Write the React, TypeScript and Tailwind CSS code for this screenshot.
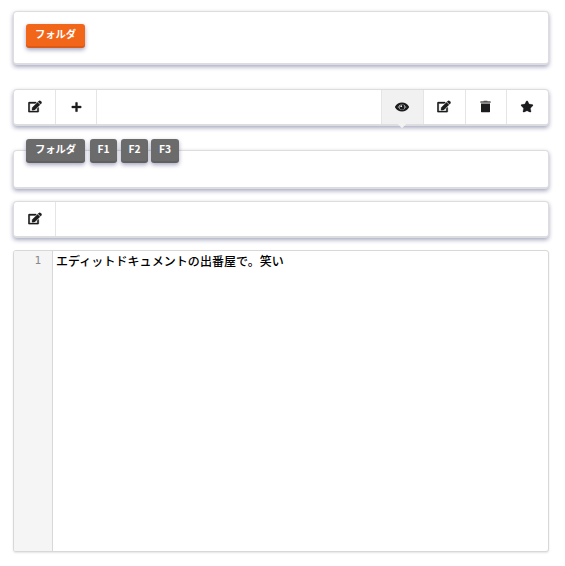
import type { ReactNode } from "react";
import { FaEdit, FaPlus, FaStar } from "react-icons/fa";

const panel =
  "rounded-[4px] border border-b-2 border-[#dddddf] bg-white shadow-[0_2px_4px_rgba(60,65,120,0.45)]";

function Label({ children, className }: { children: ReactNode; className: string }) {
  return (
    <span
      className={`flex h-6 items-center justify-center rounded-[3px] pb-[3px] text-[10.3px] leading-none font-bold text-white ${className}`}
    >
      {children}
    </span>
  );
}

const gray =
  "bg-[#6b6b6b] shadow-[inset_0_-2px_0_rgba(0,0,0,0.1),0_2px_4px_rgba(60,65,120,0.45)]";
const orange =
  "bg-[#f2661a] shadow-[inset_0_-2px_0_rgba(0,0,0,0.1),0_2px_4px_rgba(60,65,120,0.45)]";

function Edit() {
  return <FaEdit className="h-3 w-[14px] -translate-y-[0.5px] stroke-[#1b1c1d] stroke-[14]" />;
}

function Eye() {
  return (
    <svg viewBox="0 0 576 512" className="h-[13px] w-[14px] -translate-x-px -translate-y-[0.5px]" fill="none">
      <path
        stroke="currentColor"
        strokeWidth="84"
        d="M40 256C90 170 178 108 288 108s198 62 248 148c-50 86-138 148-248 148S90 342 40 256z"
      />
      <circle cx="288" cy="256" r="106" fill="currentColor" />
      <path d="M106 256C125 215 145 185 165 165M470 256C451 215 431 185 411 165M106 256C125 297 145 327 165 347M470 256C451 297 431 327 411 347" stroke="currentColor" strokeWidth="60" />
      <circle cx="256" cy="222" r="38" fill="#f1f1f2" />
    </svg>
  );
}

function Trash() {
  return (
    <svg viewBox="0 0 448 512" className="h-3 w-[11px] -translate-x-px -translate-y-[0.5px]" fill="currentColor">
      <path
        opacity=".75"
        d="M0 84V56c0-13.3 10.7-24 24-24h112l9.4-18.7c4-8.2 12.3-13.3 21.4-13.3h114.3c9.1 0 17.4 5.1 21.5 13.3L312 32h112c13.3 0 24 10.7 24 24v28c0 6.6-5.4 12-12 12H12C5.4 96 0 90.6 0 84z"
      />
      <path d="M416 140v324c0 26.5-21.5 48-48 48H80c-26.5 0-48-21.5-48-48V140c0-6.6 5.4-12 12-12h360c6.6 0 12 5.4 12 12z" />
    </svg>
  );
}

function Item({ children, className }: { children: ReactNode; className: string }) {
  return (
    <div className={`flex items-center justify-center border-[#e5e5e6] text-[#1b1c1d] ${className}`}>
      {children}
    </div>
  );
}

export default function App() {
  return (
    <div className="h-[566px] w-[565px] bg-white pt-[11px] pl-[13px] font-['Noto_Sans_CJK_JP',sans-serif]">
      <div className="flex w-[536px] flex-col">
        <section className={`flex h-[54px] items-start pt-3 pl-3 ${panel}`}>
          <Label className={`w-[59px] ${orange}`}>フォルダ</Label>
        </section>

        <nav className={`mt-6 flex h-[37px] ${panel}`}>
          <Item className="w-[42px] border-r"><Edit /></Item>
          <Item className="w-[41px] border-r"><FaPlus className="size-[11px] -translate-y-[0.5px] stroke-[#1b1c1d] stroke-[14]" /></Item>
          <Item className="relative ml-auto w-[43px] border-x bg-[#f1f1f2]">
            <Eye />
            <span className="absolute -bottom-[3px] left-[17px] size-[6px] rotate-45 bg-[#f2f2f2]" />
          </Item>
          <Item className="w-[42px] border-r"><span className="-translate-x-px"><Edit /></span></Item>
          <Item className="w-[41px] border-r"><Trash /></Item>
          <Item className="w-[41px]"><FaStar className="h-3 w-[13px] -translate-x-[0.5px] -translate-y-[0.5px] stroke-[#1b1c1d] stroke-[12]" /></Item>
        </nav>

        <section className={`mt-6 flex h-[39px] items-start pl-3 ${panel}`}>
          <div className="-mt-3 flex">
            <Label className={`w-[59px] ${gray}`}>フォルダ</Label>
            <Label className={`ml-[5px] w-[27px] ${gray}`}>F1</Label>
            <Label className={`ml-1 w-[27px] ${gray}`}>F2</Label>
            <Label className={`ml-[3px] w-7 ${gray}`}>F3</Label>
          </div>
        </section>

        <nav className={`mt-3 flex h-[37px] ${panel}`}>
          <Item className="w-[42px] border-r"><Edit /></Item>
        </nav>

        <main className="mt-3 flex h-[302px] overflow-hidden rounded-[3px] border border-[#d8d8d9] bg-white shadow-[0_1px_2px_rgba(34,36,38,0.12)]">
          <div className="w-[39px] border-r border-[#d8d8d8] bg-[#f5f5f5] pt-px pr-[11px] text-right font-['DejaVu_Sans_Mono',monospace] text-[11px] leading-[18px] text-[#888]">
            1
          </div>
          <div className="pt-px pl-[3px] text-[12px] leading-[18px] font-medium tracking-[0.06px] text-black">
            エディットドキュメントの出番屋で。笑い
          </div>
        </main>
      </div>
    </div>
  );
}
